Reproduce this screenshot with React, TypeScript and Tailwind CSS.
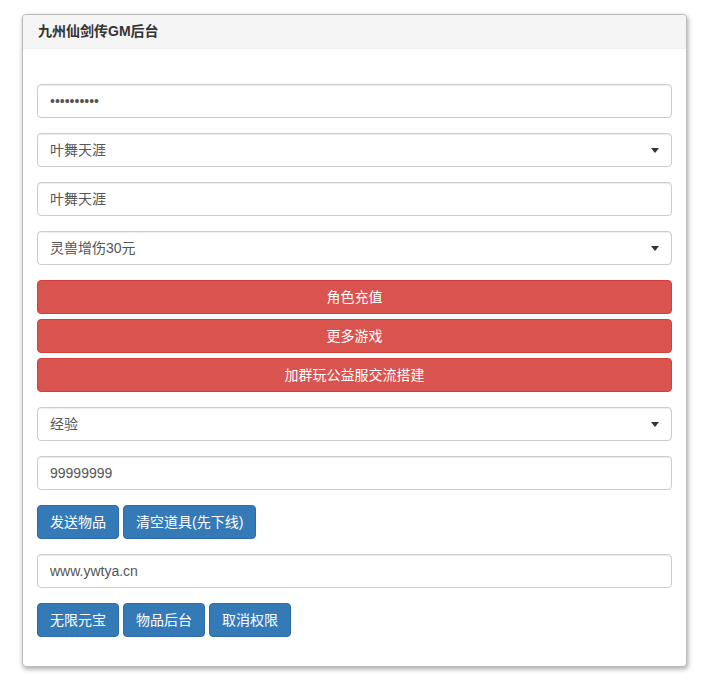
import React from "react";

const font = {
  fontFamily: '"Liberation Sans", Arial, "Noto Sans CJK SC", sans-serif',
};

function Field({ value, select = false }: { value: string; select?: boolean }) {
  return (
    <div className="relative flex h-[34px] w-full items-center rounded-[4px] border border-[#ccc] bg-white pl-[12px] text-[14px] text-[#555] shadow-[inset_0_1px_1px_rgba(0,0,0,0.075)]">
      <span>{value}</span>
      {select && (
        <span className="absolute right-[12px] top-[14px] h-0 w-0 border-x-[4px] border-t-[5px] border-x-transparent border-t-[#333]" />
      )}
    </div>
  );
}

function RedButton({ label }: { label: string }) {
  return (
    <div className="flex h-[34px] w-full items-center justify-center rounded-[4px] border border-[#d43f3a] bg-[#d9534f] text-[14px] text-white">
      {label}
    </div>
  );
}

function BlueButton({ label }: { label: string }) {
  return (
    <div className="flex h-[34px] items-center rounded-[4px] border border-[#2e6da4] bg-[#337ab7] px-[12px] text-[14px] text-white">
      {label}
    </div>
  );
}

export default function App() {
  return (
    <div className="min-h-[692px] bg-white pt-[14px]" style={font}>
      <div className="ml-[22px] w-[665px] rounded-[4px] border border-[#bbb] bg-white shadow-[1px_2px_5px_rgba(0,0,0,0.35)]">
        <div className="flex h-[34px] items-center rounded-t-[4px] border-b border-[#eee] bg-[#f5f5f5] px-[15px] text-[14px] font-bold text-[#333]">
          九州仙剑传GM后台
        </div>
        <div className="flex flex-col px-[14px] pb-[29px] pt-[35px]">
          <div className="flex flex-col gap-[15px]">
            <Field value="••••••••••" />
            <Field value="叶舞天涯" select />
            <Field value="叶舞天涯" />
            <Field value="灵兽增伤30元" select />
          </div>
          <div className="mt-[15px] flex flex-col gap-[5px]">
            <RedButton label="角色充值" />
            <RedButton label="更多游戏" />
            <RedButton label="加群玩公益服交流搭建" />
          </div>
          <div className="mt-[15px] flex flex-col gap-[15px]">
            <Field value="经验" select />
            <Field value="99999999" />
            <div className="flex gap-[4px]">
              <BlueButton label="发送物品" />
              <BlueButton label="清空道具(先下线)" />
            </div>
            <Field value="www.ywtya.cn" />
            <div className="flex gap-[4px]">
              <BlueButton label="无限元宝" />
              <BlueButton label="物品后台" />
              <BlueButton label="取消权限" />
            </div>
          </div>
        </div>
      </div>
    </div>
  );
}
